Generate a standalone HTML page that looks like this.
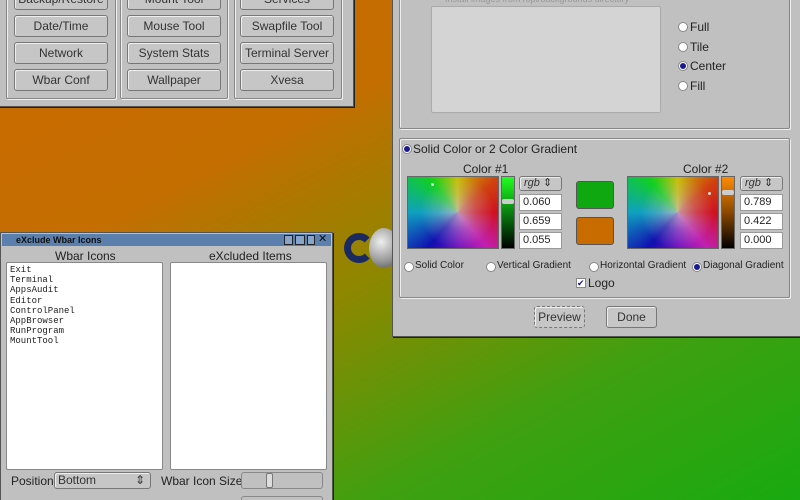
<!DOCTYPE html>
<html><head><meta charset="utf-8"><style>
*{box-sizing:border-box;margin:0;padding:0}
html,body{width:800px;height:500px;overflow:hidden}
body{position:relative;font-family:"Liberation Sans","DejaVu Sans",sans-serif;font-size:12px;color:#222;
background:linear-gradient(152deg,#cc6a00 0%,#c46e00 30%,#8c8800 52%,#40a010 75%,#18aa10 100%)}
.a{position:absolute}
.win{background:#c0c0c0;border:1px solid #555;box-shadow:1px 1px 0 #222}
.grp{position:absolute;border:1px solid #888;box-shadow:inset 1px 1px 0 #eee,1px 1px 0 #eee;border-radius:2px}
.btn{position:absolute;background:#c6c6c6;border:1px solid #777;border-radius:3px;box-shadow:inset 1px 1px 0 #eee;text-align:center;font-size:12px;line-height:20px;color:#333}
.rad{position:absolute;width:10px;height:10px;border-radius:50%;background:#fff;border:1px solid #888}
.rad.on::after{content:"";position:absolute;left:1px;top:1px;width:6px;height:6px;border-radius:50%;background:#1a1a90}
.fld{position:absolute;background:#fff;border:1px solid #999;font-size:11px;line-height:15px;padding-left:3px}
.cf{position:absolute;border:1px solid #666;background:radial-gradient(circle at 55% 50%,rgba(200,190,200,.75) 0%,rgba(200,190,200,.3) 30%,rgba(200,190,200,0) 60%),conic-gradient(from 0deg at 55% 50%,#c8c000 0deg,#d04010 50deg,#d01020 90deg,#c020b0 140deg,#7010c0 180deg,#1010b0 220deg,#10a0c0 270deg,#10d020 320deg,#c8c000 360deg)}
.lst{position:absolute;background:#fff;border:1px solid #888;border-radius:2px;font-family:"Liberation Mono",monospace;font-size:9px;line-height:10.2px;padding:2px 3px}
.sm{font-size:10px}
</style></head><body>

<div class="a win" style="left:-2px;top:-10px;width:356px;height:117px"></div>
<div class="grp" style="left:6px;top:-10px;width:110px;height:109px"></div>
<div class="grp" style="left:120px;top:-10px;width:108px;height:109px"></div>
<div class="grp" style="left:234px;top:-10px;width:108px;height:109px"></div>
<div class="btn" style="left:14px;top:-12px;width:94px;height:22px">Backup/Restore</div>
<div class="btn" style="left:14px;top:15px;width:94px;height:22px">Date/Time</div>
<div class="btn" style="left:14px;top:42px;width:94px;height:22px">Network</div>
<div class="btn" style="left:14px;top:69px;width:94px;height:22px">Wbar Conf</div>
<div class="btn" style="left:127px;top:-12px;width:94px;height:22px">Mount Tool</div>
<div class="btn" style="left:127px;top:15px;width:94px;height:22px">Mouse Tool</div>
<div class="btn" style="left:127px;top:42px;width:94px;height:22px">System Stats</div>
<div class="btn" style="left:127px;top:69px;width:94px;height:22px">Wallpaper</div>
<div class="btn" style="left:240px;top:-12px;width:94px;height:22px">Services</div>
<div class="btn" style="left:240px;top:15px;width:94px;height:22px">Swapfile Tool</div>
<div class="btn" style="left:240px;top:42px;width:94px;height:22px">Terminal Server</div>
<div class="btn" style="left:240px;top:69px;width:94px;height:22px">Xvesa</div>

<div class="a" style="left:344px;top:233px;width:30px;height:30px;border-radius:50%;border:7px solid #1a2a60;border-right-color:transparent"></div>
<div class="a" style="left:369px;top:228px;width:30px;height:40px;border-radius:50%;background:radial-gradient(circle at 40% 35%,#eee,#999 60%,#555)"></div>

<div class="a win" style="left:392px;top:-10px;width:410px;height:347px"></div>
<div class="grp" style="left:399px;top:-10px;width:391px;height:139px"></div>
<div class="a" style="left:445px;top:-6px;font-size:9px;color:#999">Install images from /opt/backgrounds directory</div>
<div class="a" style="left:431px;top:6px;width:230px;height:107px;background:#d4d4d4;border:1px solid #aaa;border-radius:2px"></div>
<div class="rad" style="left:678px;top:22px"></div><div class="a" style="left:690px;top:20px">Full</div>
<div class="rad" style="left:678px;top:42px"></div><div class="a" style="left:690px;top:40px">Tile</div>
<div class="rad on" style="left:678px;top:61px"></div><div class="a" style="left:690px;top:59px">Center</div>
<div class="rad" style="left:678px;top:81px"></div><div class="a" style="left:690px;top:79px">Fill</div>

<div class="grp" style="left:399px;top:138px;width:391px;height:160px"></div>
<div class="rad on" style="left:402px;top:144px"></div><div class="a" style="left:413px;top:142px">Solid Color or 2 Color Gradient</div>
<div class="a" style="left:463px;top:162px">Color #1</div>
<div class="a" style="left:683px;top:162px">Color #2</div>
<div class="cf" style="left:407px;top:176px;width:92px;height:73px"></div>
<div class="a" style="left:431px;top:183px;width:3px;height:3px;background:#ddd;border-radius:50%"></div>
<div class="a" style="left:501px;top:176px;width:14px;height:73px;border:1px solid #666;background:linear-gradient(#20ff20,#0a8010 50%,#000)"></div>
<div class="a" style="left:502px;top:199px;width:12px;height:5px;background:#ccc;border-radius:2px"></div>
<div class="btn" style="left:519px;top:176px;width:43px;height:15px;line-height:13px;font-style:italic;font-size:11px;text-align:left;padding-left:4px">rgb <span style="font-style:normal">⇕</span></div>
<div class="fld" style="left:519px;top:194px;width:43px;height:17px">0.060</div>
<div class="fld" style="left:519px;top:213px;width:43px;height:17px">0.659</div>
<div class="fld" style="left:519px;top:232px;width:43px;height:17px">0.055</div>
<div class="a" style="left:576px;top:181px;width:38px;height:28px;background:#10a810;border:1px solid #555;border-radius:3px"></div>
<div class="a" style="left:576px;top:217px;width:38px;height:28px;background:#c86c00;border:1px solid #555;border-radius:3px"></div>
<div class="cf" style="left:627px;top:176px;width:92px;height:73px"></div>
<div class="a" style="left:708px;top:192px;width:3px;height:3px;background:#ddd;border-radius:50%"></div>
<div class="a" style="left:721px;top:176px;width:14px;height:73px;border:1px solid #666;background:linear-gradient(#ff8c00,#8a4800 50%,#000)"></div>
<div class="a" style="left:722px;top:190px;width:12px;height:5px;background:#ccc;border-radius:2px"></div>
<div class="btn" style="left:740px;top:176px;width:43px;height:15px;line-height:13px;font-style:italic;font-size:11px;text-align:left;padding-left:4px">rgb <span style="font-style:normal">⇕</span></div>
<div class="fld" style="left:740px;top:194px;width:43px;height:17px">0.789</div>
<div class="fld" style="left:740px;top:213px;width:43px;height:17px">0.422</div>
<div class="fld" style="left:740px;top:232px;width:43px;height:17px">0.000</div>
<div class="rad" style="left:404px;top:262px"></div><div class="a sm" style="left:415px;top:260px">Solid Color</div>
<div class="rad" style="left:486px;top:262px"></div><div class="a sm" style="left:497px;top:260px">Vertical Gradient</div>
<div class="rad" style="left:589px;top:262px"></div><div class="a sm" style="left:600px;top:260px">Horizontal Gradient</div>
<div class="rad on" style="left:692px;top:262px"></div><div class="a sm" style="left:703px;top:260px">Diagonal Gradient</div>
<div class="a" style="left:576px;top:278px;width:10px;height:10px;background:#fff;border:1px solid #888;font-size:9px;line-height:8px;color:#1a1a90;font-weight:bold">✔</div>
<div class="a" style="left:588px;top:276px">Logo</div>
<div class="btn" style="left:534px;top:306px;width:51px;height:22px;border-style:dashed">Preview</div>
<div class="btn" style="left:606px;top:306px;width:51px;height:22px">Done</div>

<div class="a win" style="left:0px;top:232px;width:333px;height:275px"></div>
<div class="a" style="left:2px;top:234px;width:329px;height:12px;background:#5b80ad"></div>
<div class="a" style="left:16px;top:234px;font-size:9px;font-weight:bold;color:#111;line-height:12px">eXclude Wbar Icons</div>
<div class="a" style="left:284px;top:235px;width:9px;height:10px;border:1px solid #222;background:#8aa4c8"></div>
<div class="a" style="left:295px;top:235px;width:10px;height:10px;border:1px solid #222;background:#8aa4c8"></div>
<div class="a" style="left:307px;top:235px;width:8px;height:10px;border:1px solid #222;background:#8aa4c8"></div>
<div class="a" style="left:318px;top:233px;font-size:11px;line-height:12px;color:#111">✕</div>
<div class="a" style="left:55px;top:249px">Wbar Icons</div>
<div class="a" style="left:209px;top:249px">eXcluded Items</div>
<div class="lst" style="left:6px;top:262px;width:157px;height:208px">Exit<br>Terminal<br>AppsAudit<br>Editor<br>ControlPanel<br>AppBrowser<br>RunProgram<br>MountTool</div>
<div class="lst" style="left:170px;top:262px;width:157px;height:208px"></div>
<div class="a" style="left:11px;top:474px">Position</div>
<div class="btn" style="left:54px;top:472px;width:97px;height:17px;line-height:15px;text-align:left;padding-left:3px">Bottom<span style="position:absolute;right:5px">⇕</span></div>
<div class="a" style="left:161px;top:474px">Wbar Icon Size</div>
<div class="a" style="left:241px;top:472px;width:82px;height:17px;background:#c0c0c0;border:1px solid #888;border-radius:3px"></div>
<div class="a" style="left:266px;top:473px;width:7px;height:15px;background:#ddd;border:1px solid #777;border-radius:2px"></div>
<div class="a" style="left:241px;top:496px;width:82px;height:17px;border:1px solid #888;border-radius:3px"></div>
</body></html>
